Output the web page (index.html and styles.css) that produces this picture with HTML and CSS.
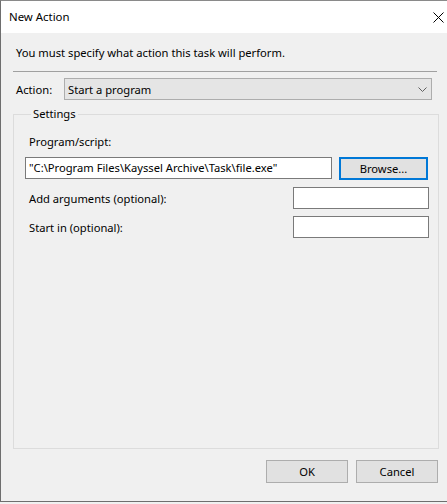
FILE: index.html
```html
<!DOCTYPE html>
<html lang="en">
<head>
<meta charset="utf-8">
<title>New Action</title>
<link rel="stylesheet" href="styles.css">
</head>
<body>
<div class="window">
  <div class="titlebar">
    <span class="title">New Action</span>
    <span class="close">
      <svg width="11" height="11" viewBox="0 0 11 11"><path d="M0.5 0.5L10.5 10.5M10.5 0.5L0.5 10.5" stroke="#000" stroke-width="1" fill="none"/></svg>
    </span>
  </div>
  <div class="content">
    <p class="instruction">You must specify what action this task will perform.</p>
    <div class="separator"></div>
    <div class="action-row">
      <span class="action-label">Action:</span>
      <div class="select">
        <span>Start a program</span>
        <svg class="chevron" width="9" height="5" viewBox="0 0 9 5"><path d="M0.5 0.5L4.5 4.5L8.5 0.5" stroke="#606060" stroke-width="1" fill="none"/></svg>
      </div>
    </div>
    <fieldset class="settings">
      <legend>Settings</legend>
      <div class="field-label">Program/script:</div>
      <div class="program-row">
        <div class="textbox program">"C:\Program Files\Kayssel Archive\Task\file.exe"</div>
        <div class="button browse">Browse...</div>
      </div>
      <div class="opt-row">
        <span class="opt-label">Add arguments (optional):</span>
        <div class="textbox small"></div>
      </div>
      <div class="opt-row">
        <span class="opt-label">Start in (optional):</span>
        <div class="textbox small"></div>
      </div>
    </fieldset>
    <div class="buttons">
      <div class="button">OK</div>
      <div class="button">Cancel</div>
    </div>
  </div>
</div>
</body>
</html>
```

FILE: styles.css
```css
html, body {
  margin: 0;
  padding: 0;
  background: #f0f0f0;
}
body {
  font-family: "Noto Sans", "Open Sans", sans-serif;
  font-size: 11.2px;
  color: #000;
  width: 447px;
  height: 504px;
  overflow: hidden;
}
.window {
  width: 446px;
  height: 500px;
  border-left: 1px solid #6e6e6e;
  border-top: 1px solid #8a8a8a;
  border-bottom: 1px solid #6e6e6e;
  background: #f0f0f0;
}
.titlebar {
  height: 32px;
  background: #fff;
  display: flex;
  align-items: center;
  justify-content: space-between;
  padding: 0 3px 0 8px;
}
.title {
  line-height: 16px;
  font-size: 11.4px;
}
.close {
  display: flex;
  margin-top: 1px;
}
.content {
  padding: 12px 0 0 12px;
}
.instruction {
  margin: 0 0 0 3px;
  line-height: 16px;
}
.separator {
  margin-top: 10px;
  width: 424px;
  height: 1px;
  background: #a0a0a0;
}
.action-row {
  margin-top: 6px;
  display: flex;
  align-items: center;
  height: 22px;
}
.action-label {
  margin-left: 3px;
  width: 48px;
}
.select {
  height: 20px;
  border: 1px solid #adadad;
  background: #e5e5e5;
  display: flex;
  align-items: center;
  justify-content: space-between;
  padding: 0 4px 0 3px;
  box-sizing: content-box;
  width: 359px;
}
.chevron {
  margin-top: 1px;
}
.settings {
  margin: 6px 0 0 0;
  width: 426px;
  border: 1px solid #dcdcdc;
  padding: 12px 0 0 11px;
  box-sizing: border-box;
  height: 343px;
}
.settings legend {
  padding: 0 2px;
  margin-left: 6px;
  line-height: 16px;
}
.field-label {
  margin-left: 4px;
  line-height: 16px;
}
.program-row {
  margin-top: 7px;
  display: flex;
  height: 23px;
}
.textbox {
  border: 1px solid #7a7a7a;
  background: #fff;
  box-sizing: border-box;
  height: 22px;
  line-height: 20px;
  padding-left: 3px;
  white-space: nowrap;
  overflow: hidden;
}
.textbox.program {
  width: 307px;
}
.button {
  box-sizing: border-box;
  height: 23px;
  width: 82px;
  border: 1px solid #adadad;
  background: #e1e1e1;
  display: flex;
  align-items: center;
  justify-content: center;
}
.button.browse {
  margin-left: 7px;
  width: 89px;
  border: 2px solid #0078d7;
}
.opt-row {
  margin-top: 7px;
  display: flex;
  align-items: center;
  justify-content: space-between;
  height: 22px;
  width: 404px;
}
.opt-label {
  margin-left: 4px;
}
.textbox.small {
  width: 136px;
}
.buttons {
  margin-top: 11px;
  width: 425px;
  display: flex;
  justify-content: flex-end;
  gap: 8px;
}
```
